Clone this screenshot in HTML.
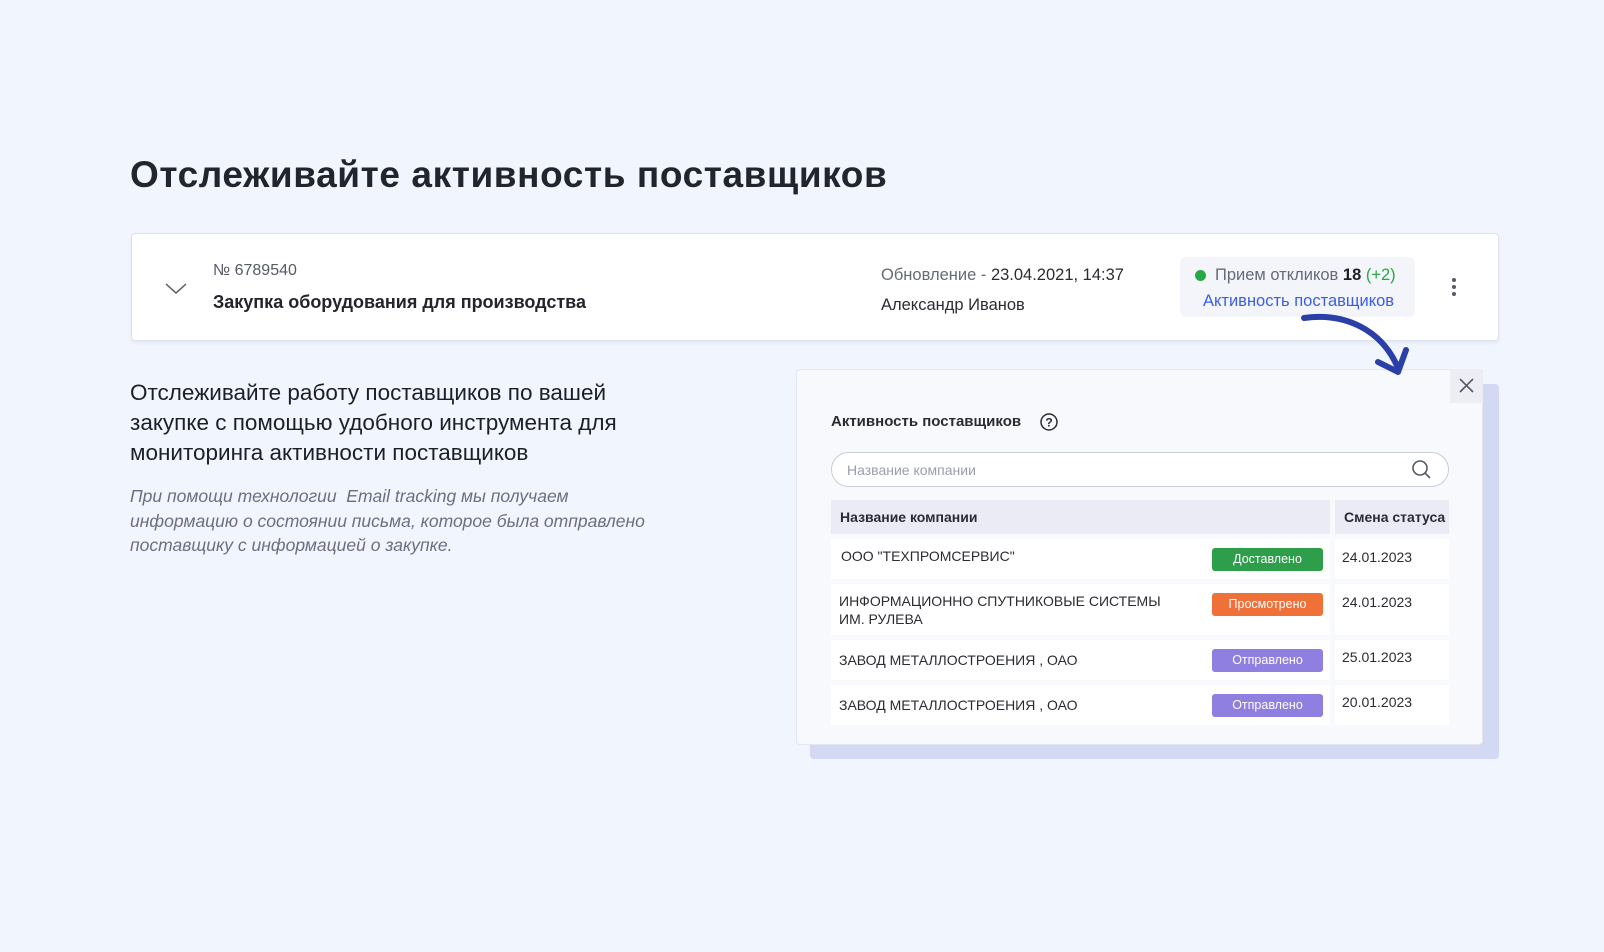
<!DOCTYPE html>
<html><head><meta charset="utf-8"><style>
*{margin:0;padding:0;box-sizing:border-box}
body{width:1604px;height:952px;background:#f1f5fe;font-family:"Liberation Sans","Noto Sans CJK SC",sans-serif;color:#1d1f26;position:relative;overflow:hidden}
.a{position:absolute;white-space:nowrap}
h1{position:absolute;left:130px;top:154px;font-size:37px;font-weight:bold;color:#23252c;letter-spacing:0.6px}
.card{position:absolute;left:131px;top:233px;width:1368px;height:108px;background:#fff;border:1px solid #dde2ee;border-radius:4px;box-shadow:0 2px 3px rgba(0,0,0,.06)}
.status{position:absolute;left:1180px;top:257px;width:235px;height:60px;background:#f3f5fb;border-radius:6px}
.shadow{position:absolute;left:810px;top:384px;width:689px;height:375px;background:#d3d9f3;border-radius:4px}
.pop{position:absolute;left:796px;top:369px;width:687px;height:376px;background:#f8f9fc;border:1px solid #e3e6ee;border-radius:4px}
.close{position:absolute;left:1450px;top:369px;width:33px;height:34px;background:#eceef4}
.search{position:absolute;left:831px;top:452px;width:618px;height:35px;border:1.5px solid #c8ccd8;border-radius:18px;background:#fff}
.th{position:absolute;background:#eaebf5;font-size:14px;font-weight:bold;color:#2a2c33;padding-left:9px;line-height:34px}
.td{position:absolute;background:#fff;font-size:14px;color:#2a2c33}
.b{position:absolute;left:1212px;width:111px;height:23px;border-radius:3px;color:#fff;font-size:12.5px;text-align:center;line-height:23px}
</style></head><body>
<h1>Отслеживайте активность поставщиков</h1>
<div class="card"></div>
<svg class="a" style="left:164px;top:282px" width="24" height="14"><path d="M2 2 L12 11 L22 2" fill="none" stroke="#555a66" stroke-width="1.5"/></svg>
<div class="a" style="left:213px;top:262px;font-size:16px;color:#555a66">№ 6789540</div>
<div class="a" style="left:213px;top:292px;font-size:18px;font-weight:bold;color:#23252c">Закупка оборудования для производства</div>
<div class="a" style="left:881px;top:266px;font-size:16.5px;color:#666b78">Обновление - <span style="color:#2a2c33">23.04.2021, 14:37</span></div>
<div class="a" style="left:881px;top:296px;font-size:16.5px;color:#2a2c33">Александр Иванов</div>
<div class="status"></div>
<div class="a" style="left:1195px;top:270px;width:11px;height:11px;border-radius:50%;background:#27a844"></div>
<div class="a" style="left:1215px;top:266px;font-size:16.5px;color:#666b78">Прием откликов <b style="color:#1d1f26">18</b> <span style="color:#27a844">(+2)</span></div>
<div class="a" style="left:1203px;top:292px;font-size:16.5px;color:#3a5ee8">Активность поставщиков</div>
<div class="a" style="left:1452px;top:285px;width:4px;height:4px;border-radius:50%;background:#555a66;box-shadow:0 -7px 0 #555a66,0 7px 0 #555a66"></div>
<div class="a" style="left:130px;top:378px;font-size:22.5px;line-height:30px;color:#1d1f26;white-space:normal;width:515px">Отслеживайте работу поставщиков по вашей закупке с помощью удобного инструмента для мониторинга активности поставщиков</div>
<div class="a" style="left:130px;top:484px;font-size:17.5px;line-height:24.5px;font-style:italic;color:#6b6f80;white-space:normal;width:540px">При помощи технологии &nbsp;Email tracking мы получаем информацию о состоянии письма, которое была отправлено поставщику с информацией о закупке.</div>
<div class="shadow"></div>
<div class="pop"></div>
<div class="close"><svg width="33" height="34"><path d="M10 10 L23 23 M23 10 L10 23" stroke="#555a66" stroke-width="1.6"/></svg></div>
<svg class="a" style="left:1290px;top:310px" width="130" height="75"><path d="M14 8 C55 2 92 20 108 58" fill="none" stroke="#2a3fa8" stroke-width="6" stroke-linecap="round"/><path d="M88 52 L108 62 L116 40" fill="none" stroke="#2a3fa8" stroke-width="6" stroke-linecap="round" stroke-linejoin="round"/></svg>
<div class="a" style="left:831px;top:413px;font-size:15px;font-weight:bold;color:#2a2c33">Активность поставщиков</div>
<svg class="a" style="left:1039px;top:412px" width="20" height="20"><circle cx="10" cy="10" r="8" fill="none" stroke="#2a2c33" stroke-width="1.5"/><text x="10" y="14.5" font-size="12" font-weight="bold" text-anchor="middle" fill="#2a2c33" font-family="Liberation Sans">?</text></svg>
<div class="search"></div>
<div class="a" style="left:847px;top:462px;font-size:14px;color:#9a9eab">Название компании</div>
<svg class="a" style="left:1411px;top:459px" width="22" height="22"><circle cx="9" cy="9" r="7" fill="none" stroke="#555a66" stroke-width="1.6"/><path d="M14 14 L19 19" stroke="#555a66" stroke-width="1.6"/></svg>
<div class="th" style="left:831px;top:500px;width:499px;height:34px">Название компании</div>
<div class="th" style="left:1335px;top:500px;width:114px;height:34px">Смена статуса</div>

<div class="td" style="left:831px;top:539px;width:499px;height:40px"><span class="a" style="left:10px;top:9px">ООО "ТЕХПРОМСЕРВИС"</span></div>
<div class="td" style="left:1335px;top:539px;width:114px;height:40px"><span class="a" style="left:7px;top:10px">24.01.2023</span></div>
<div class="b" style="top:548px;background:#2e9e4a">Доставлено</div>

<div class="td" style="left:831px;top:584px;width:499px;height:51px"><span class="a" style="left:8px;top:8px;line-height:18px">ИНФОРМАЦИОННО СПУТНИКОВЫЕ СИСТЕМЫ<br>ИМ. РУЛЕВА</span></div>
<div class="td" style="left:1335px;top:584px;width:114px;height:51px"><span class="a" style="left:7px;top:10px">24.01.2023</span></div>
<div class="b" style="top:593px;background:#f0703a">Просмотрено</div>

<div class="td" style="left:831px;top:640px;width:499px;height:40px"><span class="a" style="left:8px;top:12px">ЗАВОД МЕТАЛЛОСТРОЕНИЯ , ОАО</span></div>
<div class="td" style="left:1335px;top:640px;width:114px;height:40px"><span class="a" style="left:7px;top:9px">25.01.2023</span></div>
<div class="b" style="top:649px;background:#8e7fe0">Отправлено</div>

<div class="td" style="left:831px;top:685px;width:499px;height:40px"><span class="a" style="left:8px;top:12px">ЗАВОД МЕТАЛЛОСТРОЕНИЯ , ОАО</span></div>
<div class="td" style="left:1335px;top:685px;width:114px;height:40px"><span class="a" style="left:7px;top:9px">20.01.2023</span></div>
<div class="b" style="top:694px;background:#8e7fe0">Отправлено</div>
</body></html>
